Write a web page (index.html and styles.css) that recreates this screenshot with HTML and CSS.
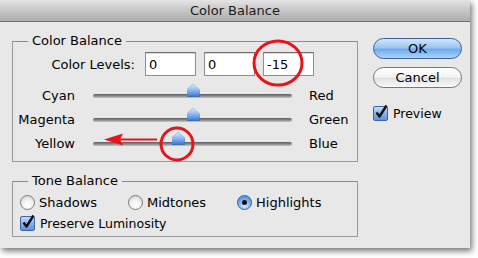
FILE: index.html
```html
<!DOCTYPE html>
<html lang="en">
  <head>
    <meta charset="UTF-8" />
    <title>Color Balance</title>
    <link rel="stylesheet" href="styles.css">
  </head>
  <body>
    <div class="window">
      <!-- Title bar -->
      <div class="titlebar">Color Balance</div>

      <div class="content">
        <div class="left-col">
          <!-- Color Balance group -->
          <fieldset class="group group-balance">
            <legend>Color Balance</legend>
            <div class="levels-row">
              <span class="levels-label">Color Levels:</span>
              <input class="level-input" type="text" value="0">
              <input class="level-input" type="text" value="0">
              <input class="level-input" type="text" value="-15">
            </div>

            <div class="slider-row">
              <span class="slider-left">Cyan</span>
              <div class="track">
                <span class="thumb" style="left: 50%"></span>
              </div>
              <span class="slider-right">Red</span>
            </div>
            <div class="slider-row">
              <span class="slider-left">Magenta</span>
              <div class="track">
                <span class="thumb" style="left: 50%"></span>
              </div>
              <span class="slider-right">Green</span>
            </div>
            <div class="slider-row">
              <span class="slider-left">Yellow</span>
              <div class="track">
                <span class="thumb" style="left: 42.5%"></span>
              </div>
              <span class="slider-right">Blue</span>
            </div>
          </fieldset>

          <!-- Tone Balance group -->
          <fieldset class="group group-tone">
            <legend>Tone Balance</legend>
            <div class="radio-row">
              <label class="radio-item"><span class="radio"></span>Shadows</label>
              <label class="radio-item"><span class="radio"></span>Midtones</label>
              <label class="radio-item"><span class="radio checked"></span>Highlights</label>
            </div>
            <label class="check-item">
              <span class="checkbox">
                <svg viewBox="0 0 16 16" width="16" height="16">
                  <path d="M3.5 8.5 L6.5 12.5 L13.5 1.5" fill="none" stroke="#111" stroke-width="2.4" stroke-linejoin="round" />
                </svg>
              </span>
              Preserve Luminosity
            </label>
          </fieldset>
        </div>

        <!-- Buttons -->
        <div class="right-col">
          <button class="btn btn-ok">OK</button>
          <button class="btn btn-cancel">Cancel</button>
          <label class="check-item preview">
            <span class="checkbox">
              <svg viewBox="0 0 16 16" width="16" height="16">
                <path d="M3.5 8.5 L6.5 12.5 L13.5 1.5" fill="none" stroke="#111" stroke-width="2.4" stroke-linejoin="round" />
              </svg>
            </span>
            Preview
          </label>
        </div>
      </div>

      <!-- Red annotations drawn over the dialog -->
      <svg class="annotations" width="478" height="258" viewBox="0 0 478 258">
        <ellipse cx="278" cy="63" rx="24" ry="22" fill="none" stroke="#e8141c" stroke-width="3" />
        <circle cx="177" cy="144" r="16" fill="none" stroke="#e8141c" stroke-width="3" />
        <line x1="157" y1="139.5" x2="118" y2="139.5" stroke="#e8141c" stroke-width="2" />
        <polygon points="104,139.5 123,133.5 120,139.5 123,145.5" fill="#e8141c" />
      </svg>
    </div>
  </body>
</html>
```

FILE: styles.css
```css
* {
  margin: 0;
  padding: 0;
  box-sizing: border-box;
}

body {
  font-family: "DejaVu Sans", "Liberation Sans", sans-serif;
  font-size: 12.5px;
  color: #000;
  background: #fff;
  width: 478px;
  height: 258px;
  overflow: hidden;
}

.window {
  position: relative;
  width: 470px;
  height: 248px;
  background: #e8e8e8;
  box-shadow: 2px 3px 6px rgba(0, 0, 0, 0.55);
}

.titlebar {
  height: 22px;
  line-height: 21px;
  text-align: center;
  font-size: 13px;
  color: #1a1a1a;
  background: linear-gradient(#e4e4e4, #c9c9c9 45%, #adadad);
  border-bottom: 1px solid #6f6f6f;
}

.content {
  display: flex;
  padding: 11px 0 0 12px;
}

.left-col {
  width: 346px;
}

.right-col {
  width: 89px;
  margin-left: 15px;
  padding-top: 5px;
  display: flex;
  flex-direction: column;
}

/* Group boxes */
.group {
  border: 1px solid #9a9a9a;
  border-top-color: #8c8c8c;
  min-width: 0;
}

.group legend {
  margin-left: 15px;
  padding: 0 4px;
  line-height: 16px;
  font-size: 13px;
}

.group-balance {
  padding: 3px 0 6px;
}

.group-tone {
  margin-top: 11px;
  padding: 5px 0 5px;
}

/* Color levels */
.levels-row {
  display: flex;
  align-items: center;
  height: 24px;
  margin-bottom: 7px;
}

.levels-label {
  width: 122px;
  text-align: right;
  margin-right: 10px;
  font-size: 13px;
}

.level-input {
  width: 51px;
  height: 24px;
  margin-right: 8px;
  border: 1px solid #8e8e8e;
  border-top-color: #6e6e6e;
  background: #fff;
  font-family: inherit;
  font-size: 13px;
  padding: 1px 0 0 3px;
  color: #000;
  box-shadow: inset 0 1px 1px rgba(0, 0, 0, 0.15);
}

/* Sliders */
.slider-row {
  display: flex;
  align-items: center;
  height: 24px;
}

.slider-left {
  width: 62px;
  text-align: right;
  font-size: 13px;
}

.track {
  position: relative;
  width: 199px;
  height: 4px;
  margin: 2px 17px 0 18px;
  border-radius: 2px;
  background: linear-gradient(#5c5c5c, #8a8a8a 50%, #c8c8c8);
}

.thumb {
  position: absolute;
  bottom: 1px;
  width: 13px;
  height: 13px;
  margin-left: -6px;
  filter: drop-shadow(0 0 0.6px #2b4f8c);
}

.thumb::before {
  content: "";
  position: absolute;
  inset: 0;
  background: linear-gradient(#dcebfe, #93bdf3 45%, #4d86de 85%, #3a66b0);
  clip-path: polygon(50% 0, 100% 45%, 100% 100%, 0 100%, 0 45%);
}

.slider-right {
  font-size: 13px;
}

/* Radios */
.radio-row {
  display: grid;
  grid-template-columns: 108px 109px auto;
  padding-left: 7px;
  height: 16px;
  align-items: center;
}

.radio-item {
  display: flex;
  align-items: center;
  gap: 4px;
  font-size: 13px;
}

.radio {
  display: inline-block;
  width: 15px;
  height: 15px;
  border-radius: 50%;
  border: 1px solid #7d7d7d;
  background: radial-gradient(circle at 50% 70%, #ffffff, #f2f2f2 45%, #c9c9c9);
  position: relative;
}

.radio.checked {
  border-color: #35609e;
  background: radial-gradient(circle at 50% 75%, #d6ecff, #7fb1ee 50%, #3f78cf);
}

.radio.checked::after {
  content: "";
  position: absolute;
  left: 4px;
  top: 4px;
  width: 5px;
  height: 5px;
  border-radius: 50%;
  background: #111;
}

/* Checkboxes */
.check-item {
  display: flex;
  align-items: center;
  gap: 5px;
  font-size: 12.5px;
  height: 16px;
}

.group-tone .check-item {
  margin-top: 5px;
  padding-left: 7px;
}

.checkbox {
  position: relative;
  width: 15px;
  height: 15px;
  border: 1px solid #3f65a0;
  border-radius: 2px;
  background: linear-gradient(#c6dcf8, #86b3ec 50%, #5d93e0);
}

.checkbox svg {
  position: absolute;
  left: -1px;
  top: -3px;
}

/* Buttons */
.btn {
  width: 89px;
  height: 21px;
  border-radius: 11px;
  font-family: inherit;
  font-size: 13px;
  color: #000;
}

.btn-ok {
  border: 1px solid #3d5f98;
  background: linear-gradient(#d2e6fc, #9cc6f4 45%, #70abee 55%, #a9d6fb);
}

.btn-cancel {
  margin-top: 8px;
  border: 1px solid #777;
  background: linear-gradient(#ffffff, #f4f4f4 45%, #e2e2e2 55%, #fafafa);
}

.preview {
  margin-top: 17px;
}

/* Annotations */
.annotations {
  position: absolute;
  left: 0;
  top: 0;
  pointer-events: none;
}
```
